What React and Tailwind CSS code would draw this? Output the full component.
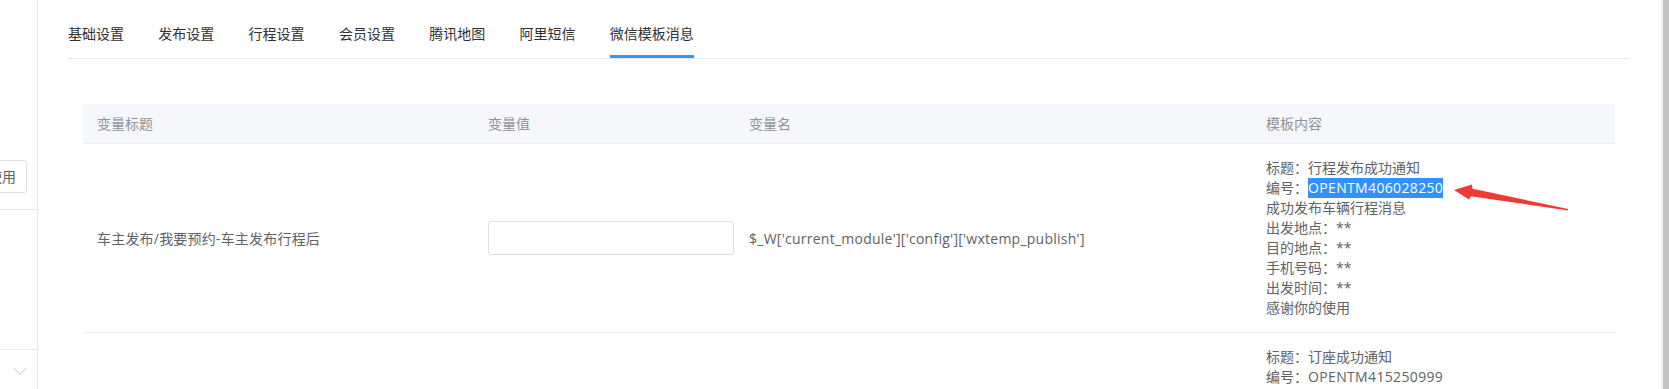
import React from "react";

const tabs = ["基础设置", "发布设置", "行程设置", "会员设置", "腾讯地图", "阿里短信", "微信模板消息"];

function Sidebar() {
  return (
    <div className="w-[38px] shrink-0 h-full border-r border-[#e6e6e6] flex flex-col overflow-hidden">
      <div className="h-[160px] shrink-0" />
      <div className="h-[33px] shrink-0 flex justify-end pr-[10px]">
        <div className="shrink-0 h-[33px] border border-[#dcdfe6] rounded-[3px] bg-white pl-[10px] pr-[10px] text-[14px] leading-[31px] text-[#606266] whitespace-nowrap">
          使用
        </div>
      </div>
      <div className="h-[17px] shrink-0 border-b border-[#e6e6e6]" />
      <div className="h-[140px] shrink-0 border-b border-[#e6e6e6]" />
      <div className="flex justify-center pt-[17px] pl-[2px]">
        <svg width="14" height="9" viewBox="0 0 14 9" fill="none">
          <path d="M1 1 L7 7.5 L13 1" stroke="#c0c4cc" strokeWidth="1" />
        </svg>
      </div>
    </div>
  );
}

function Tabs() {
  return (
    <div className="flex gap-[34.3px] pt-[24px] border-b border-[#e4e7ed]">
      {tabs.map((t, i) => (
        <div key={t} className="flex flex-col">
          <div className="h-[20px] leading-[20px] text-[14px] text-[#303133] whitespace-nowrap">{t}</div>
          <div className={"mt-[11px] h-[3px] " + (i === tabs.length - 1 ? "bg-[#3a94f5]" : "bg-transparent")} />
        </div>
      ))}
    </div>
  );
}

const row1Lines = [
  "标题：行程发布成功通知",
  null,
  "成功发布车辆行程消息",
  "出发地点：**",
  "目的地点：**",
  "手机号码：**",
  "出发时间：**",
  "感谢你的使用",
];

function Table() {
  return (
    <div className="mt-[45px] mx-[15px] text-[14px]">
      <div className="grid grid-cols-[391px_261px_517px_1fr] h-[40px] items-center bg-[#f5f7fa] border-b border-[#ebeef5] text-[#909399]">
        <div className="px-[14px]">变量标题</div>
        <div className="px-[14px]">变量值</div>
        <div className="px-[14px]">变量名</div>
        <div className="px-[14px]">模板内容</div>
      </div>
      <div className="grid grid-cols-[391px_261px_517px_1fr] items-center border-b border-[#ebeef5] text-[#606266]">
        <div className="px-[14px] whitespace-nowrap tracking-[0.2px]">车主发布/我要预约-车主发布行程后</div>
        <div className="px-[14px]">
          <div className="w-[246px] h-[34px] border border-[#dcdfe6] rounded-[3px] bg-white" />
        </div>
        <div className="px-[14px] whitespace-nowrap tracking-[0.25px]">$_W['current_module']['config']['wxtemp_publish']</div>
        <div className="px-[14px] py-[14px] leading-[20px]">
          {row1Lines.map((l, i) =>
            l === null ? (
              <div key={i} className="h-[20px] whitespace-nowrap">
                编号：<span className="inline-block h-[20px] bg-[#3390ff] text-white tracking-[0.35px]">OPENTM406028250</span>
              </div>
            ) : (
              <div key={i} className="h-[20px] whitespace-nowrap">{l}</div>
            )
          )}
        </div>
      </div>
      <div className="grid grid-cols-[391px_261px_517px_1fr] text-[#606266]">
        <div />
        <div />
        <div />
        <div className="px-[14px] pt-[14px] leading-[20px]">
          <div className="h-[20px] whitespace-nowrap">标题：订座成功通知</div>
          <div className="h-[20px] whitespace-nowrap">
            编号：<span className="tracking-[0.35px]">OPENTM415250999</span>
          </div>
        </div>
      </div>
    </div>
  );
}

export default function App() {
  return (
    <div className="relative w-[1669px] h-[389px] overflow-hidden bg-white flex [font-family:'Open_Sans','Noto_Sans_CJK_SC',sans-serif]">
      <Sidebar />
      <div className="flex-1 min-w-0 pl-[30px] pr-[31px]">
        <Tabs />
        <Table />
      </div>
      <div className="w-[8px] shrink-0 h-full flex">
        <div className="w-[2px] h-full bg-[#f1f1f1]" />
        <div className="w-[6px] h-full bg-[#c1c1c1]" />
      </div>
      <svg className="absolute left-[1440px] top-[170px]" width="140" height="50" viewBox="0 0 140 50">
        <polygon points="14,20 32,14.5 32.5,18.8 128,39 128,40.4 31,26.3 29,29.5" fill="#ee3a33" />
      </svg>
    </div>
  );
}
